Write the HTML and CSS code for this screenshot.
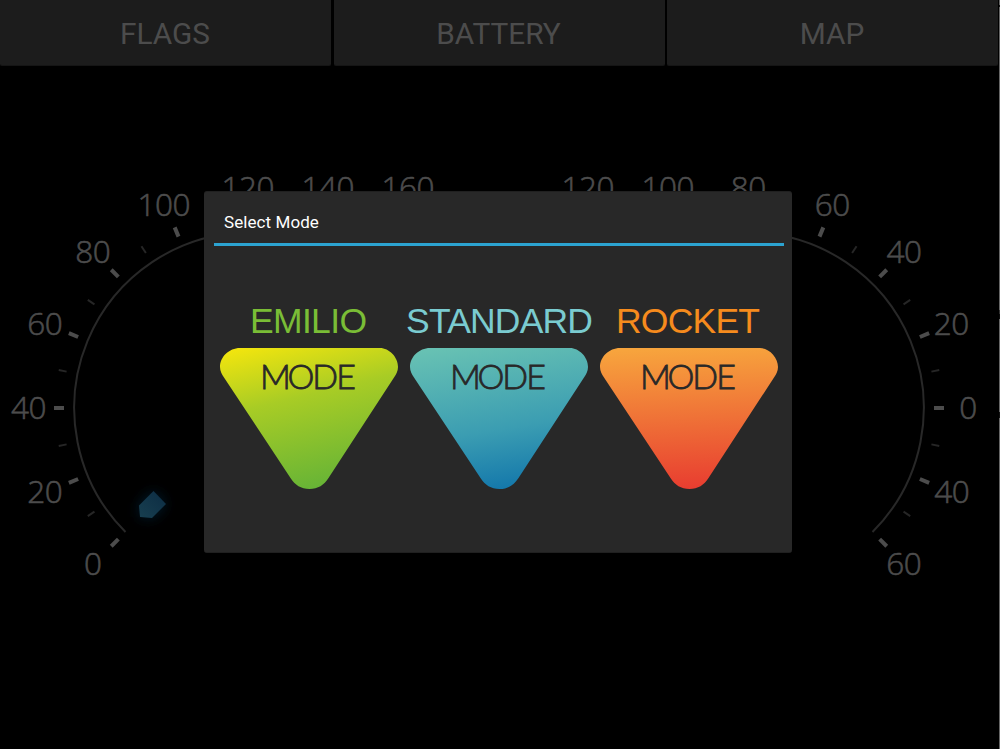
FILE: index.html
```
<!DOCTYPE html>
<html lang="en">
<head>
<meta charset="utf-8">
<title>Select Mode</title>
<link rel="stylesheet" href="styles.css">
</head>
<body>
<div class="screen">
  <nav class="tabs">
    <div class="tab">FLAGS</div>
    <div class="tab">BATTERY</div>
    <div class="tab">MAP</div>
  </nav>
  <svg class="gauges" viewBox="0 66 1000 683" width="1000" height="683">
    <defs>
      <filter id="glow" x="-100%" y="-100%" width="300%" height="300%"><feGaussianBlur stdDeviation="7"/></filter>
      <linearGradient id="needle" x1="1" y1="0" x2="0" y2="1"><stop offset="0" stop-color="#0c2c43"/><stop offset="1" stop-color="#183f50"/></linearGradient>
      <g id="dial">
        <path class="arc" d="M125.5 532 A175.5 175.5 0 0 1 249.5 232.5"/>
        <g class="major">
          <path d="M54 408H64"/>
          <path d="M54 408H64" transform="rotate(-45 249.5 408)"/>
          <path d="M54 408H64" transform="rotate(-22.5 249.5 408)"/>
          <path d="M54 408H64" transform="rotate(22.5 249.5 408)"/>
          <path d="M54 408H64" transform="rotate(45 249.5 408)"/>
          <path d="M54 408H64" transform="rotate(67.5 249.5 408)"/>
        </g>
        <g class="minor">
          <path d="M55 408H63" transform="rotate(-33.75 249.5 408)"/>
          <path d="M55 408H63" transform="rotate(-11.25 249.5 408)"/>
          <path d="M55 408H63" transform="rotate(11.25 249.5 408)"/>
          <path d="M55 408H63" transform="rotate(33.75 249.5 408)"/>
          <path d="M55 408H63" transform="rotate(56.25 249.5 408)"/>
        </g>
      </g>
    </defs>
    <use href="#dial"/>
    <use href="#dial" transform="translate(998 0) scale(-1 1)"/>
    <g class="numbers">
      <text x="93" y="574.5">0</text>
      <text x="45" y="502.7" textLength="35.500">20</text>
      <text x="28.7" y="418.7" textLength="35.500">40</text>
      <text x="45" y="334.7" textLength="35.500">60</text>
      <text x="93" y="262.7" textLength="35.500">80</text>
      <text x="164" y="215.5" textLength="53">100</text>
      <text x="248" y="198.5" textLength="53">120</text>
      <text x="328" y="198.5" textLength="53">140</text>
      <text x="408" y="198.5" textLength="53">160</text>
      <text x="588" y="198.5" textLength="53">120</text>
      <text x="668" y="198.5" textLength="53">100</text>
      <text x="748.5" y="198.5" textLength="35.500">80</text>
      <text x="832.5" y="215.5" textLength="35.500">60</text>
      <text x="904.3" y="262.7" textLength="35.500">40</text>
      <text x="951.5" y="334.7" textLength="35.500">20</text>
      <text x="968.3" y="418.7">0</text>
      <text x="952" y="502.7" textLength="35.500">40</text>
      <text x="904" y="574.5" textLength="35.500">60</text>
    </g>
    <path class="needle-glow" filter="url(#glow)" d="M153.5 491L166 504L152 518L140 517L139 505.500Z"/>
    <path fill="url(#needle)" d="M153.500 491L166 504L152 518L140 517L139 505.500Z"/>
  </svg>
  <div class="edge"></div>
  <section class="dialog">
    <h1 class="title">Select Mode</h1>
    <div class="modes">
      <svg class="mode" viewBox="214 300 190 195">
        <defs><linearGradient id="green" gradientUnits="userSpaceOnUse" x1="272" y1="340" x2="308" y2="490"><stop offset="0" stop-color="#f2e50e"/><stop offset=".4" stop-color="#a8cc25"/><stop offset="1" stop-color="#67b436"/></linearGradient></defs>
        <text class="name green" x="250" y="333" textLength="117">EMILIO</text>
        <path fill="url(#green)" d="M240 348H380C389 348 398 357 398 367C398 371 396 374.500 394 377.500L328.500 478C324 485 318 489 309.500 489C301 489 295 485 290.500 478L224 377.500C222 374.500 220 371 220 367C220 357 229 348 240 348Z"/>
        <text class="word" x="260 287.500 312.300 336.300" y="389.300">MODE</text>
      </svg>
      <svg class="mode" viewBox="214 300 190 195">
        <defs><linearGradient id="blue" gradientUnits="userSpaceOnUse" x1="285" y1="343" x2="309" y2="490"><stop offset="0" stop-color="#67c1b3"/><stop offset=".6" stop-color="#3b9db2"/><stop offset="1" stop-color="#1478ab"/></linearGradient></defs>
        <text class="name blue" x="216" y="333" textLength="187">STANDARD</text>
        <path fill="url(#blue)" d="M240 348H380C389 348 398 357 398 367C398 371 396 374.500 394 377.500L328.500 478C324 485 318 489 309.500 489C301 489 295 485 290.500 478L224 377.500C222 374.500 220 371 220 367C220 357 229 348 240 348Z"/>
        <text class="word" x="260 287.500 312.300 336.300" y="389.300">MODE</text>
      </svg>
      <svg class="mode" viewBox="214 300 190 195">
        <defs><linearGradient id="orange" gradientUnits="userSpaceOnUse" x1="303" y1="348" x2="309" y2="489"><stop offset="0" stop-color="#f7a43d"/><stop offset=".5" stop-color="#ef7137"/><stop offset="1" stop-color="#e83d30"/></linearGradient></defs>
        <text class="name orange" x="236" y="333" textLength="144">ROCKET</text>
        <path fill="url(#orange)" d="M240 348H380C389 348 398 357 398 367C398 371 396 374.500 394 377.500L328.500 478C324 485 318 489 309.500 489C301 489 295 485 290.500 478L224 377.500C222 374.500 220 371 220 367C220 357 229 348 240 348Z"/>
        <text class="word" x="260 287.500 312.300 336.300" y="389.300">MODE</text>
      </svg>
    </div>
  </section>
</div>
</body>
</html>
```
FILE: styles.css
```
body { margin: 0; background: #000; }
.screen { position: relative; width: 1000px; height: 749px; overflow: hidden; background: #000; }
.tabs { display: grid; grid-template-columns: 331px 331px 331px; gap: 2.5px; height: 66px; }
.tab { display: flex; align-items: center; justify-content: center; height: 66px; padding: 3px 1px 0 0; box-sizing: border-box; border-radius: 0 0 2px 2px; background: #1c1c1c; border-bottom: 1px solid #151515; color: #4c4c4c; font: 400 29.8px/36px Roboto, sans-serif; }
.gauges { display: block; }
.arc { fill: none; stroke: #282828; stroke-width: 2; }
.major { stroke: #4c4c4c; stroke-width: 4; }
.minor { stroke: #262626; stroke-width: 2; }
.numbers { fill: #4c4c4c; stroke: #4c4c4c; stroke-width: .6; font: 300 31.5px "Open Sans", "Noto Sans", sans-serif; text-anchor: middle; }
.needle-glow { fill: #06304f; opacity: .6; }
.edge { position: absolute; top: 0; right: 0; width: 1px; height: 749px; background: linear-gradient(#666 5px, #111 5px 7px, #666 7px 310px, #333 310px 314px, #0c0c0c 314px 319px, #666 319px 412px, #111 412px 418px, #666 418px); }
.dialog { position: absolute; left: 204px; top: 191px; width: 588px; height: 362px; box-sizing: border-box; padding: 0 8px 0 10px; border-radius: 3px; background: #282828; border: 1px solid #202020; border-left-width: 0; border-right-width: 0; }
.title { height: 51px; margin: 0; padding: 0 0 0 10px; border-bottom: 3px solid #2ca3d1; color: #fff; font: 400 17px/60px Roboto, sans-serif; letter-spacing: .08px; }
.modes { display: flex; padding-top: 54px; }
.mode { display: block; width: 190px; height: 195px; flex: none; overflow: visible; }
.name { font: 400 35.5px "Liberation Sans", Arial, sans-serif; }
.green { fill: #7abd36; }
.blue { fill: #7acbd0; }
.orange { fill: #f68b1d; }
.word { fill: #282828; stroke: #282828; stroke-width: .8; font: 300 34px Lato, sans-serif; }
```
